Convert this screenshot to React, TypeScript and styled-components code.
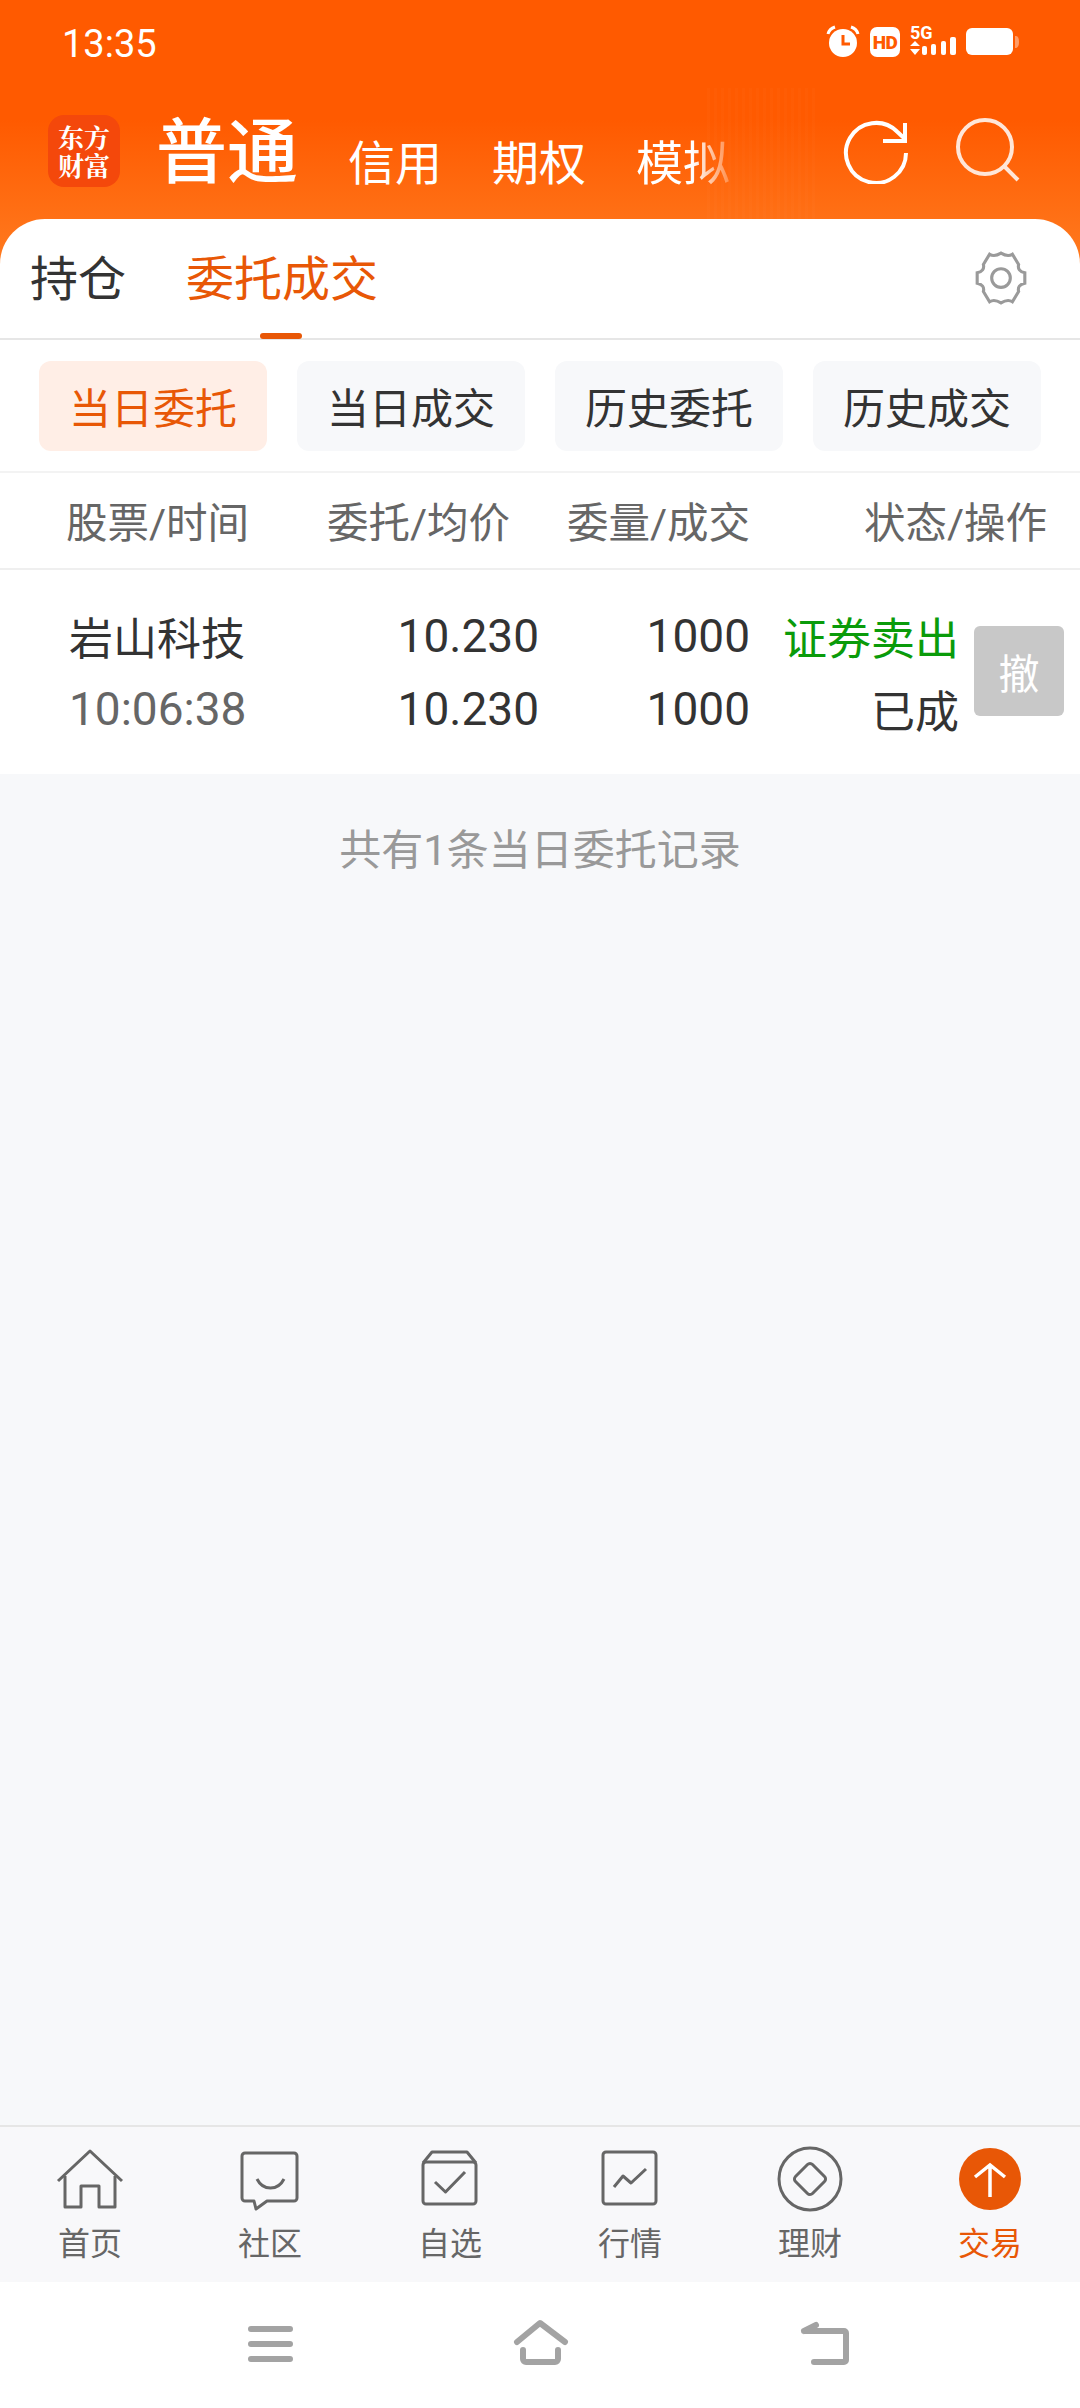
import styled, { createGlobalStyle } from "styled-components";

const GlobalStyle = createGlobalStyle`
  html, body {
    margin: 0;
    padding: 0;
    background: #f7f8fa;
  }
  * {
    box-sizing: border-box;
  }
`;

const FONT = `Roboto, "Noto Sans CJK SC", sans-serif`;

const Page = styled.div`
  width: 1080px;
  height: 2408px;
  display: flex;
  flex-direction: column;
  overflow: hidden;
  font-family: ${FONT};
  background: #f7f8fa;
`;

const Top = styled.div`
  background: linear-gradient(180deg, #ff5a00 0, #ff5a00 120px, #ff7a1f 262px);
`;

const StatusBar = styled.div`
  height: 88px;
  padding: 0 61px 0 62px;
  display: flex;
  align-items: center;
  justify-content: space-between;
  color: #fff;
`;

const Clock = styled.span`
  font-size: 38px;
`;

const StatusIcons = styled.div`
  display: flex;
  align-items: center;
  gap: 10px;
  margin-top: -4px;
`;

const HdBadge = styled.span`
  width: 30px;
  height: 30px;
  border-radius: 7px;
  background: #fff;
  color: #ff5a00;
  font-size: 19px;
  font-weight: 900;
  letter-spacing: -0.5px;
  display: flex;
  align-items: center;
  justify-content: center;
`;

const Signal = styled.div`
  width: 46px;
  height: 32px;
  position: relative;
`;

const FiveG = styled.span`
  position: absolute;
  left: 0;
  top: -2px;
  font-size: 18px;
  line-height: 18px;
  font-weight: 700;
  color: #fff;
`;

const Header = styled.div`
  height: 131px;
  padding: 0 60px 0 48px;
  display: flex;
  align-items: flex-start;
  color: #fff;
  position: relative;
`;

// faint leftover texture behind the fading tab
const GhostTexture = styled.div`
  position: absolute;
  left: 707px;
  top: 0;
  width: 110px;
  height: 131px;
  pointer-events: none;
  background: repeating-linear-gradient(
    90deg,
    rgba(255, 255, 255, 0.015) 0,
    rgba(255, 255, 255, 0.015) 3px,
    transparent 3px,
    transparent 7px
  );
`;

const Logo = styled.div`
  width: 72px;
  height: 72px;
  margin-top: 27px;
  border-radius: 16px;
  background: #f4480b;
  color: #fff;
  font-size: 26px;
  line-height: 28px;
  font-weight: 700;
  text-align: center;
  padding-top: 8px;
  font-family: "Noto Serif CJK SC", "Noto Sans CJK SC", serif;
`;

const HeaderTabs = styled.div`
  display: flex;
  align-items: flex-start;
  margin-left: 36px;
  margin-top: 23px;
`;

const MainTab = styled.span`
  font-size: 71px;
  line-height: 84px;
  font-weight: 500;
  margin-right: 50px;
`;

const SubTab = styled.span<{ $fade?: boolean }>`
  font-size: 47px;
  line-height: 56px;
  margin-top: 25px;
  margin-right: 50px;
  ${(p) =>
    p.$fade &&
    `-webkit-mask-image: linear-gradient(90deg, #000 60%, rgba(0,0,0,0.25) 100%);
     mask-image: linear-gradient(90deg, #000 60%, rgba(0,0,0,0.25) 100%);`}
`;

const HeaderActions = styled.div`
  margin-left: auto;
  display: flex;
  gap: 45px;
  margin-top: 30px;
`;

const TabPanel = styled.div`
  height: 121px;
  background: #fff;
  border-radius: 45px 45px 0 0;
  border-bottom: 2px solid #e6e6e6;
  padding: 0 50px 0 30px;
  display: flex;
  align-items: flex-start;
`;

const MainTabButton = styled.div<{ $active?: boolean }>`
  font-size: 48px;
  line-height: 60px;
  margin-top: 31px;
  margin-right: 60px;
  color: ${(p) => (p.$active ? "#e85706" : "#333")};
  position: relative;
  ${(p) =>
    p.$active &&
    `&::after {
      content: "";
      position: absolute;
      left: 74px;
      top: 83px;
      width: 42px;
      height: 6px;
      border-radius: 3px;
      background: #e85706;
    }`}
`;

const GearWrap = styled.div`
  margin-left: auto;
  margin-top: 30px;
  height: 60px;
`;

const ChipRow = styled.div`
  background: #fff;
  padding: 21px 40px 20px 39px;
  display: grid;
  grid-template-columns: repeat(4, 228px);
  gap: 30px;
  border-bottom: 2px solid #f3f3f3;
`;

const Chip = styled.div<{ $active?: boolean }>`
  height: 90px;
  padding-bottom: 2px;
  border-radius: 12px;
  background: ${(p) => (p.$active ? "#ffeee6" : "#f7f8fa")};
  color: ${(p) => (p.$active ? "#e85706" : "#333")};
  font-size: 42px;
  display: flex;
  align-items: center;
  justify-content: center;
`;

const TableHead = styled.div`
  height: 97px;
  background: #fff;
  border-bottom: 2px solid #efefef;
  padding: 0 33px 2px 66px;
  display: flex;
  align-items: center;
  color: #666;
  font-size: 41.5px;
`;

const HeadCell = styled.div<{ $width: number }>`
  width: ${(p) => p.$width}px;
  text-align: right;
  white-space: nowrap;
  &:first-child {
    text-align: left;
  }
`;

const OrderRow = styled.div`
  height: 204px;
  background: #fff;
  padding: 29px 15px 0 69px;
  display: flex;
  align-items: flex-start;
`;

const Cells = styled.div`
  display: grid;
  grid-template-columns: 220px 250px 211px 209px;
  grid-auto-rows: 73px;
  align-items: center;
  font-size: 44px;
  color: #333;
`;

const Cell = styled.div<{ $color?: string; $left?: boolean; $digits?: boolean }>`
  text-align: ${(p) => (p.$left ? "left" : "right")};
  color: ${(p) => p.$color || "inherit"};
  white-space: nowrap;
  ${(p) => p.$digits && `font-size: 46px;`}
`;

const CancelButton = styled.div`
  width: 90px;
  height: 90px;
  margin-left: 15px;
  margin-top: 27px;
  border-radius: 6px;
  background: #c8c8c8;
  color: #fff;
  font-size: 41px;
  display: flex;
  align-items: center;
  justify-content: center;
`;

const Records = styled.div`
  flex: 1;
  text-align: center;
  padding-top: 52px;
  font-size: 42px;
  line-height: 50px;
  color: #999;
`;

const BottomNav = styled.div`
  height: 157px;
  border-top: 2px solid #e6e6e6;
  background: #f8f8fa;
  display: grid;
  grid-template-columns: repeat(6, 180px);
  padding-top: 16px;
`;

const NavItem = styled.div<{ $active?: boolean }>`
  display: flex;
  flex-direction: column;
  align-items: center;
  color: ${(p) => (p.$active ? "#e85706" : "#666")};
  font-size: 32px;
  line-height: 36px;
  gap: 11px;
  svg {
    display: block;
  }
`;

const SystemBar = styled.div`
  height: 126px;
  background: #fff;
  flex-shrink: 0;
  padding-top: 36px;
  display: flex;
  justify-content: center;
`;

const navStroke = {
  fill: "none",
  stroke: "#666",
  strokeWidth: 3,
  strokeLinejoin: "round" as const,
};

const sysStroke = {
  fill: "none",
  stroke: "#a3a3a3",
  strokeWidth: 6,
  strokeLinecap: "round" as const,
  strokeLinejoin: "round" as const,
};

const tabs = [
  {
    label: "首页",
    icon: (
      <g {...navStroke}>
        <path d="M4 38 36 8l32 30" />
        <path d="M11 33v31h16V43h18v21h16V33" />
      </g>
    ),
  },
  {
    label: "社区",
    icon: (
      <g {...navStroke}>
        <path d="M11 10h49a3 3 0 0 1 3 3v42a3 3 0 0 1-3 3H33l-11 8-2-8h-9a3 3 0 0 1-3-3V13a3 3 0 0 1 3-3z" />
        <path d="M23 36c6 12 21 12 27 0" />
      </g>
    ),
  },
  {
    label: "自选",
    icon: (
      <g {...navStroke}>
        <rect x="9" y="19" width="53" height="42" rx="3" />
        <path d="m9 20 9-11h35l9 11" />
        <path d="m21 39 10.500 10L51 29" />
      </g>
    ),
  },
  {
    label: "行情",
    icon: (
      <g {...navStroke}>
        <rect x="9" y="9" width="53" height="52" rx="3" />
        <path d="m20 44 9-11 8 7 15-14" />
      </g>
    ),
  },
  {
    label: "理财",
    icon: (
      <g {...navStroke}>
        <circle cx="36" cy="36" r="31" />
        <path d="M33.500 21.500a3.500 3.500 0 0 1 5 0l12 12a3.500 3.500 0 0 1 0 5l-12 12a3.500 3.500 0 0 1-5 0l-12-12a3.500 3.500 0 0 1 0-5z" />
      </g>
    ),
  },
  {
    label: "交易",
    active: true,
    icon: (
      <g>
        <circle cx="36" cy="36" r="31" fill="#e85706" />
        <path d="M36 54V22M21 34l15-12 15 12" fill="none" stroke="#fff" strokeWidth="3.500" />
      </g>
    ),
  },
];

export default function App() {
  return (
    <Page>
      <GlobalStyle />
      <Top>
        <StatusBar>
          <Clock>13:35</Clock>
          <StatusIcons>
            <svg width="34" height="34" viewBox="0 0 34 34">
              <circle cx="17" cy="18" r="14" fill="#fff" />
              <path d="M17 10v9h7" fill="none" stroke="#ff5a00" strokeWidth="3" />
              <path d="M2 9c1-4 4-6 7-7M32 9c-1-4-4-6-7-7" fill="none" stroke="#fff" strokeWidth="3" />
            </svg>
            <HdBadge>HD</HdBadge>
            <Signal>
              <FiveG>5G</FiveG>
              <svg width="46" height="32" viewBox="0 0 46 32">
                <path d="M0 20h10l-5-5zM0 23h10l-5 6z" fill="#fff" />
                <rect x="12" y="20" width="5" height="9" rx="2" fill="#fff" />
                <rect x="21" y="18" width="5" height="11" rx="2" fill="#fff" />
                <rect x="31" y="15" width="5" height="14" rx="2" fill="#fff" />
                <rect x="40" y="11" width="6" height="18" rx="2" fill="#fff" />
              </svg>
            </Signal>
            <svg width="53" height="28" viewBox="0 0 53 28">
              <rect width="47" height="27" rx="6" fill="#fff" />
              <path d="M49 8c3 0 4 2 4 6s-1 6-4 6z" fill="#fff" opacity="0.4" />
            </svg>
          </StatusIcons>
        </StatusBar>
        <Header>
          <GhostTexture />
          <Logo>
            东方
            <br />
            财富
          </Logo>
          <HeaderTabs>
            <MainTab>普通</MainTab>
            <SubTab>信用</SubTab>
            <SubTab>期权</SubTab>
            <SubTab $fade>模拟</SubTab>
          </HeaderTabs>
          <HeaderActions>
            <svg width="66" height="66" viewBox="0 0 66 66" fill="none" stroke="#fff" strokeWidth="4">
              <path d="M63 35a30 30 0 1 1-9-21.500L62 21" />
              <path d="M62 5v18H40" />
            </svg>
            <svg width="66" height="66" viewBox="0 0 66 66" fill="none" stroke="#ffe6d8" strokeWidth="4">
              <circle cx="31" cy="29" r="27" />
              <path d="m50 48 14 14" />
            </svg>
          </HeaderActions>
        </Header>
        <TabPanel>
          <MainTabButton>持仓</MainTabButton>
          <MainTabButton $active>委托成交</MainTabButton>
          <GearWrap>
            <svg width="58" height="58" viewBox="0 0 56 56" fill="none" stroke="#9a9a9a" strokeWidth="3">
              <path d="M17 5c3 2 6 2 11-1 5 3 8 3 11 1l6 10c-1 4 1 7 6 8v10c-5 1-7 4-6 8l-6 10c-3-2-6-2-11 1-5-3-8-3-11-1l-6-10c1-4-1-7-6-8V23c5-1 7-4 6-8z" />
              <circle cx="28" cy="28" r="9" />
            </svg>
          </GearWrap>
        </TabPanel>
      </Top>
      <ChipRow>
        <Chip $active>当日委托</Chip>
        <Chip>当日成交</Chip>
        <Chip>历史委托</Chip>
        <Chip>历史成交</Chip>
      </ChipRow>
      <TableHead>
        <HeadCell $width={200}>股票/时间</HeadCell>
        <HeadCell $width={244}>委托/均价</HeadCell>
        <HeadCell $width={240}>委量/成交</HeadCell>
        <HeadCell $width={297}>状态/操作</HeadCell>
      </TableHead>
      <OrderRow>
        <Cells>
          <Cell $left>岩山科技</Cell>
          <Cell $digits>10.230</Cell>
          <Cell $digits>1000</Cell>
          <Cell $color="#0a9b0a">证券卖出</Cell>
          <Cell $left $digits $color="#666">10:06:38</Cell>
          <Cell $digits>10.230</Cell>
          <Cell $digits>1000</Cell>
          <Cell>已成</Cell>
        </Cells>
        <CancelButton>撤</CancelButton>
      </OrderRow>
      <Records>共有1条当日委托记录</Records>
      <BottomNav>
        {tabs.map((tab) => (
          <NavItem key={tab.label} $active={tab.active}>
            <svg width="72" height="72" viewBox="0 0 72 72">
              {tab.icon}
            </svg>
            {tab.label}
          </NavItem>
        ))}
      </BottomNav>
      <SystemBar>
        <svg width="620" height="60" viewBox="230 0 620 60" {...sysStroke}>
          <path d="M251 11h39M251 26h39M251 41h39" />
          <path d="M517 24l23-19 25 19M523 32v9a3 3 0 0 0 3 3h29a3 3 0 0 0 3-3v-9" />
          <path d="M804 13h40a2 2 0 0 1 2 2v27a2 2 0 0 1-2 2h-30M804 13l12-6" />
        </svg>
      </SystemBar>
    </Page>
  );
}
